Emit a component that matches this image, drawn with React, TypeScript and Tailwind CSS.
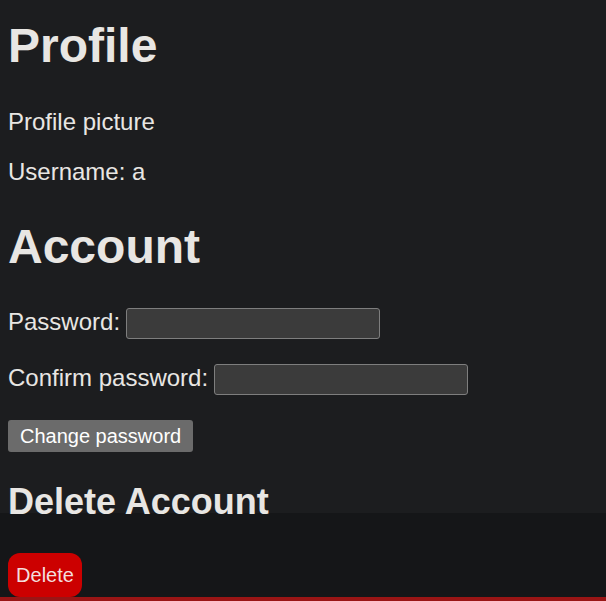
export default function App() {
	return (
		<div className="min-h-[601px] bg-[#1c1d1f] text-[#e8e6e3] font-['Liberation_Sans',Arial,sans-serif] overflow-hidden">
			<div className="px-2 pt-[18px]">
				{/* Profile */}
				<h1 className="text-[48px] leading-[56px] font-bold">Profile</h1>
				<p className="mt-[34px] text-[24px] leading-[28px]">Profile picture</p>
				<p className="mt-[22px] text-[24px] leading-[28px]">Username: a</p>

				{/* Account */}
				<h1 className="mt-[33px] text-[48px] leading-[56px] font-bold">Account</h1>
				<div className="mt-[33px] flex items-start">
					<label className="text-[24px] leading-[28px]">Password:</label>
					<input
						type="password"
						className="ml-[6px] h-[31px] w-[254px] rounded-[3px] border border-[#7e7e7e] bg-[#3b3b3b] outline-none"
					/>
				</div>
				<div className="mt-[25px] flex items-start">
					<label className="text-[24px] leading-[28px]">Confirm password:</label>
					<input
						type="password"
						className="ml-[6px] h-[31px] w-[254px] rounded-[3px] border border-[#7e7e7e] bg-[#3b3b3b] outline-none"
					/>
				</div>
				<button className="mt-[25px] h-[32px] px-3 rounded-[3px] bg-[#6b6b6b] text-white text-[20px] leading-[32px]">
					Change password
				</button>

				<h2 className="relative z-10 mt-[29px] -mb-[10px] text-[36px] leading-[42px] font-bold">Delete Account</h2>
			</div>

			{/* Danger zone */}
			<div className="bg-[#151618] px-2 pt-[40px] border-b-4 border-[#9a1515]">
				<button className="block h-[44px] w-[74px] rounded-[12px] bg-[#cc0000] text-[#f3dede] text-[20px] leading-[44px] text-center">
					Delete
				</button>
			</div>
		</div>
	);
}
